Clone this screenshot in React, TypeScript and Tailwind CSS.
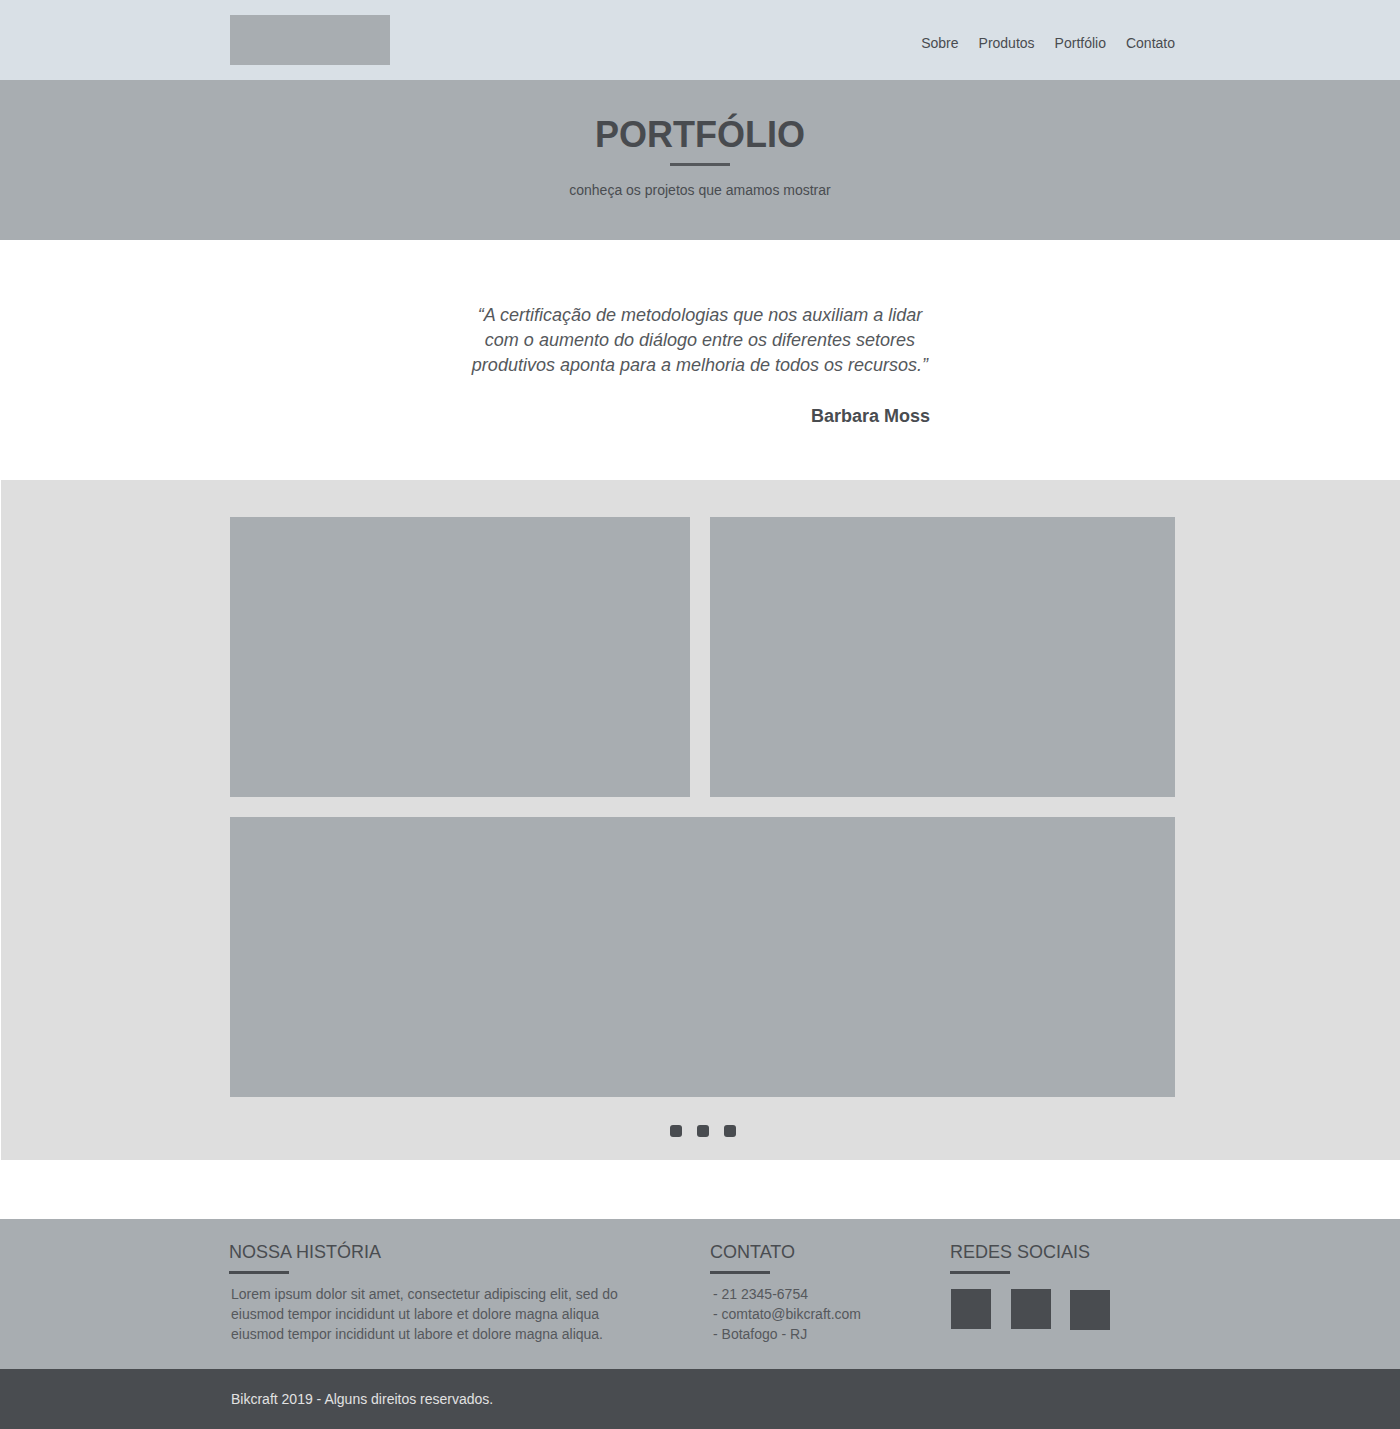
export default function App() {
  const nav = ["Sobre", "Produtos", "Portfólio", "Contato"];

  return (
    <div className="min-h-screen bg-white font-['Liberation_Sans',Arial,sans-serif] text-[#494c50]">
      {/* Header */}
      <header className="h-[80px] bg-[#d9e0e6]">
        <div className="ml-[230px] flex h-full w-[945px] items-center justify-between">
          <div className="h-[50px] w-[160px] bg-[#a8adb1]" />
          <nav className="flex gap-[20px] pt-[6px] text-[14px]">
            {nav.map((item) => (
              <a key={item} href="#" className="text-[#494c50]">
                {item}
              </a>
            ))}
          </nav>
        </div>
      </header>

      {/* Hero */}
      <section className="flex h-[160px] flex-col items-center bg-[#a8adb1] pt-[33px]">
        <h1 className="text-[36px] leading-[44px] font-bold text-[#484b4f]">PORTFÓLIO</h1>
        <div className="mt-[6px] h-[3px] w-[60px] bg-[#55585c]" />
        <p className="mt-[14px] text-[14px] text-[#494c50]">conheça os projetos que amamos mostrar</p>
      </section>

      {/* Quote */}
      <section className="flex h-[240px] justify-center pt-[63px]">
        <div className="w-[470px]">
          <p className="text-center text-[18px] leading-[25px] italic text-[#55585c]">
            “A certificação de metodologias que nos auxiliam a lidar com o aumento do diálogo entre os diferentes setores produtivos aponta para a melhoria de todos os recursos.”
          </p>
          <p className="mt-[25px] pr-[5px] text-right text-[18px] font-bold text-[#494c50]">Barbara Moss</p>
        </div>
      </section>

      {/* Gallery */}
      <section className="ml-[1px] h-[680px] bg-[#dedede] pt-[37px]">
        <div className="ml-[229px] w-[945px]">
          <div className="grid grid-cols-[460px_465px] gap-[20px]">
            <div className="h-[280px] bg-[#a8adb1]" />
            <div className="h-[280px] bg-[#a8adb1]" />
            <div className="col-span-2 h-[280px] bg-[#a8adb1]" />
          </div>
          <div className="mt-[28px] flex justify-center gap-[15px] pl-[1px]">
            <span className="h-[12px] w-[12px] rounded-[3px] bg-[#494c50]" />
            <span className="h-[12px] w-[12px] rounded-[3px] bg-[#494c50]" />
            <span className="h-[12px] w-[12px] rounded-[3px] bg-[#494c50]" />
          </div>
        </div>
      </section>

      <div className="h-[59px]" />

      {/* Footer */}
      <footer className="h-[150px] bg-[#a8adb1] pt-[22px]">
        <div className="ml-[229px] flex w-[945px]">
          <div className="w-[481px]">
            <h3 className="text-[18px] leading-[22px] text-[#494c50]">NOSSA HISTÓRIA</h3>
            <div className="mt-[8px] h-[3px] w-[60px] bg-[#494c50]" />
            <p className="mt-[10px] pl-[2px] text-[14px] leading-[20px] text-[#55585c]">
              Lorem ipsum dolor sit amet, consectetur adipiscing elit, sed do
              <br />
              eiusmod tempor incididunt ut labore et dolore magna aliqua
              <br />
              eiusmod tempor incididunt ut labore et dolore magna aliqua.
            </p>
          </div>
          <div className="w-[240px]">
            <h3 className="text-[18px] leading-[22px] text-[#494c50]">CONTATO</h3>
            <div className="mt-[8px] h-[3px] w-[60px] bg-[#494c50]" />
            <ul className="mt-[10px] pl-[3px] text-[14px] leading-[20px] text-[#55585c]">
              <li>- 21 2345-6754</li>
              <li>- comtato@bikcraft.com</li>
              <li>- Botafogo - RJ</li>
            </ul>
          </div>
          <div>
            <h3 className="text-[18px] leading-[22px] text-[#494c50]">REDES SOCIAIS</h3>
            <div className="mt-[8px] h-[3px] w-[60px] bg-[#494c50]" />
            <div className="mt-[15px] flex gap-[20px] pl-[1px]">
              <span className="h-[40px] w-[40px] bg-[#494c50]" />
              <span className="h-[40px] w-[40px] bg-[#494c50]" />
              <span className="-ml-[1px] mt-[1px] h-[40px] w-[40px] bg-[#494c50]" />
            </div>
          </div>
        </div>
      </footer>

      {/* Copyright */}
      <div className="h-[60px] bg-[#494c50]">
        <div className="ml-[230px] flex h-full w-[945px] items-center pl-[1px]">
          <p className="text-[14px] text-[#e2e2e2]">Bikcraft 2019 - Alguns direitos reservados.</p>
        </div>
      </div>
    </div>
  );
}
